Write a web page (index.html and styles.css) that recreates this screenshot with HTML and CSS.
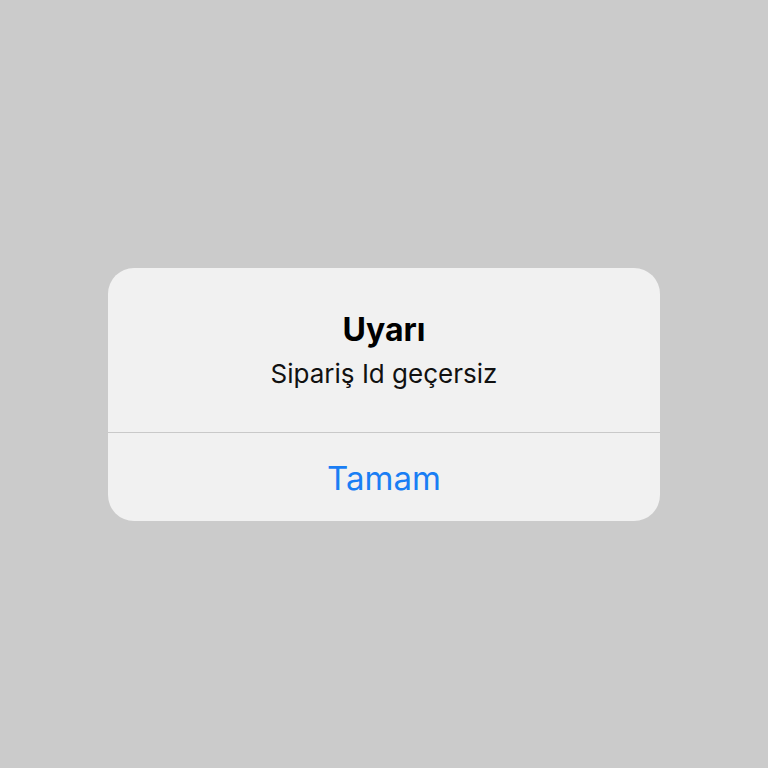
FILE: index.html
```html
<!DOCTYPE html>
<html lang="tr">
<head>
<meta charset="utf-8">
<link rel="stylesheet" href="styles.css">
</head>
<body>
<div class="screen">
  <div class="alert">
    <div class="alert-body">
      <div class="alert-title">Uyarı</div>
      <div class="alert-message">Sipariş Id geçersiz</div>
    </div>
    <div class="alert-button">Tamam</div>
  </div>
</div>
</body>
</html>
```

FILE: styles.css
```css
html, body {
  margin: 0;
  padding: 0;
  width: 768px;
  height: 768px;
  background: #cbcbcb;
}
.screen {
  width: 768px;
  height: 768px;
  display: flex;
  flex-direction: column;
  align-items: center;
  padding-top: 268px;
  box-sizing: border-box;
}
.alert {
  width: 552px;
  background: #f1f1f1;
  border-radius: 26px;
  display: flex;
  flex-direction: column;
  font-family: Inter, "Liberation Sans", sans-serif;
}
.alert-body {
  height: 165px;
  border-bottom: 1px solid #c9c9c9;
  display: flex;
  flex-direction: column;
  align-items: center;
  padding-top: 40px;
  box-sizing: border-box;
}
.alert-title {
  font-size: 32px;
  font-weight: 700;
  color: #000;
  line-height: 44px;
}
.alert-message {
  font-size: 26px;
  color: #111;
  line-height: 34px;
  margin-top: 5px;
}
.alert-button {
  height: 88px;
  display: flex;
  align-items: center;
  justify-content: center;
  font-size: 33px;
  color: #1a7ef4;
  padding-top: 2px;
  box-sizing: border-box;
}
```
